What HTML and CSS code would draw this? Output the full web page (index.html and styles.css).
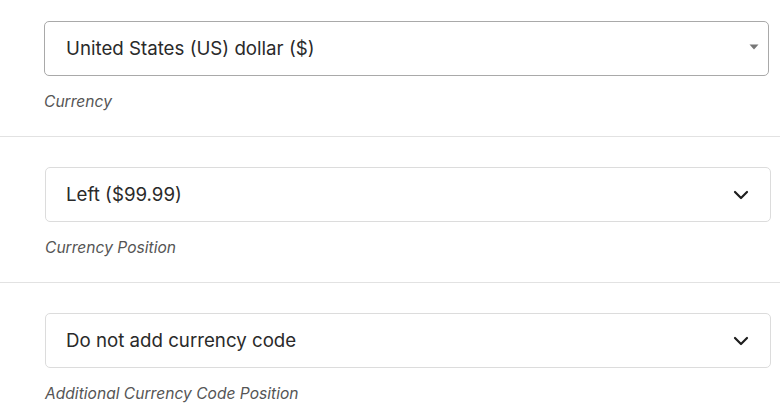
FILE: index.html
```html
<!DOCTYPE html>
<html>
<head>
<meta charset="utf-8">
<link rel="stylesheet" href="styles.css">
</head>
<body>
<div class="form">
  <div class="row first">
    <div class="select native">
      <span class="value">United States (US) dollar ($)</span>
      <svg class="caret" width="10" height="6" viewBox="0 0 10 6"><path d="M0.5 0.5 H9.5 L5 5.5 Z" fill="#777"/></svg>
    </div>
    <div class="label">Currency</div>
  </div>
  <div class="row">
    <div class="select">
      <span class="value">Left ($99.99)</span>
      <svg class="chev" width="16" height="10" viewBox="0 0 16 10"><path d="M2 2 L8 8 L14 2" fill="none" stroke="#1e1e1e" stroke-width="2.2" stroke-linecap="round" stroke-linejoin="round"/></svg>
    </div>
    <div class="label">Currency Position</div>
  </div>
  <div class="row">
    <div class="select">
      <span class="value">Do not add currency code</span>
      <svg class="chev" width="16" height="10" viewBox="0 0 16 10"><path d="M2 2 L8 8 L14 2" fill="none" stroke="#1e1e1e" stroke-width="2.2" stroke-linecap="round" stroke-linejoin="round"/></svg>
    </div>
    <div class="label">Additional Currency Code Position</div>
  </div>
</div>
</body>
</html>
```
FILE: styles.css
```css
html, body {
  margin: 0;
  padding: 0;
  background: #fff;
}
body {
  font-family: Inter, "Noto Sans", sans-serif;
  color: #1e1e1e;
  width: 780px;
  height: 415px;
  overflow: hidden;
}
.row {
  padding: 30px 9px 24px 45px;
  border-bottom: 1px solid #e2e2e2;
}
.row.first {
  padding-top: 21px;
  padding-left: 44px;
  padding-right: 11px;
}
.row:last-child {
  border-bottom: none;
}
.select {
  height: 55px;
  box-sizing: border-box;
  border: 1px solid #dcdcdc;
  border-radius: 5px;
  display: flex;
  align-items: center;
  justify-content: space-between;
  padding: 0 21px 0 20px;
}
.select.native {
  border-color: #a9a9a9;
  padding-right: 9px;
  padding-left: 21px;
}
.value {
  font-size: 18.7px;
  color: #2a2a2a;
}
.label {
  margin-top: 15px;
  font-size: 15.6px;
  line-height: 21px;
  font-style: italic;
  color: #555;
}
.caret { display: block; margin-top: -4px; }
.chev { display: block; }
```
